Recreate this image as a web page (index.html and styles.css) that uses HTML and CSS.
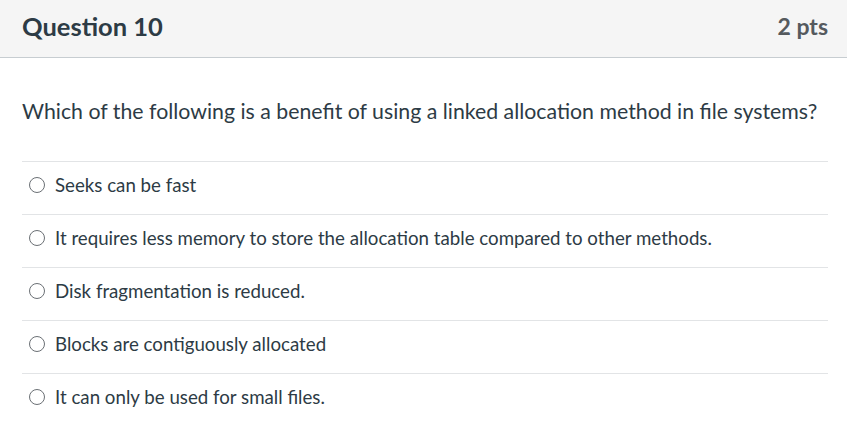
FILE: index.html
```html
<!DOCTYPE html>
<html>
<head>
<meta charset="utf-8">
<link rel="stylesheet" href="styles.css">
</head>
<body>
<div class="question">
  <div class="header">
    <h2 class="title">Question 10</h2>
    <div class="pts">2 pts</div>
  </div>
  <div class="content">
    <p class="text">Which of the following is a benefit of using a linked allocation method in file systems?</p>
    <div class="answers">
      <label class="answer"><span class="radio"></span><span class="label">Seeks can be fast</span></label>
      <label class="answer"><span class="radio"></span><span class="label">It requires less memory to store the allocation table compared to other methods.</span></label>
      <label class="answer"><span class="radio"></span><span class="label">Disk fragmentation is reduced.</span></label>
      <label class="answer"><span class="radio"></span><span class="label">Blocks are contiguously allocated</span></label>
      <label class="answer"><span class="radio"></span><span class="label">It can only be used for small files.</span></label>
    </div>
  </div>
</div>
</body>
</html>
```
FILE: styles.css
```css
html, body {
  margin: 0;
  padding: 0;
  background: #ffffff;
}
body {
  font-family: Lato, "Open Sans", sans-serif;
  color: #2d3b45;
}
.header {
  box-sizing: border-box;
  height: 58px;
  background: #f5f5f5;
  border-bottom: 1px solid #c7cdd1;
  display: flex;
  align-items: center;
  justify-content: space-between;
  padding: 0 19px 6px 22px;
}
.title {
  margin: 0;
  font-size: 25.5px;
  font-weight: 700;
  color: #2d3b45;
}
.pts {
  font-size: 23px;
  font-weight: 700;
  color: #555a5e;
}
.content {
  padding: 0 19px 0 22px;
}
.text {
  margin: 0;
  padding: 38px 0 35px;
  font-size: 21.3px;
  line-height: 30px;
}
.answer {
  box-sizing: border-box;
  display: flex;
  align-items: center;
  height: 53px;
  padding-bottom: 7px;
  border-top: 1px solid #e2e4e6;
  font-size: 18.7px;
}
.radio {
  width: 14px;
  height: 14px;
  border: 1px solid #6b7075;
  border-radius: 50%;
  margin-left: 7px;
  margin-right: 10px;
  flex: none;
}
```
